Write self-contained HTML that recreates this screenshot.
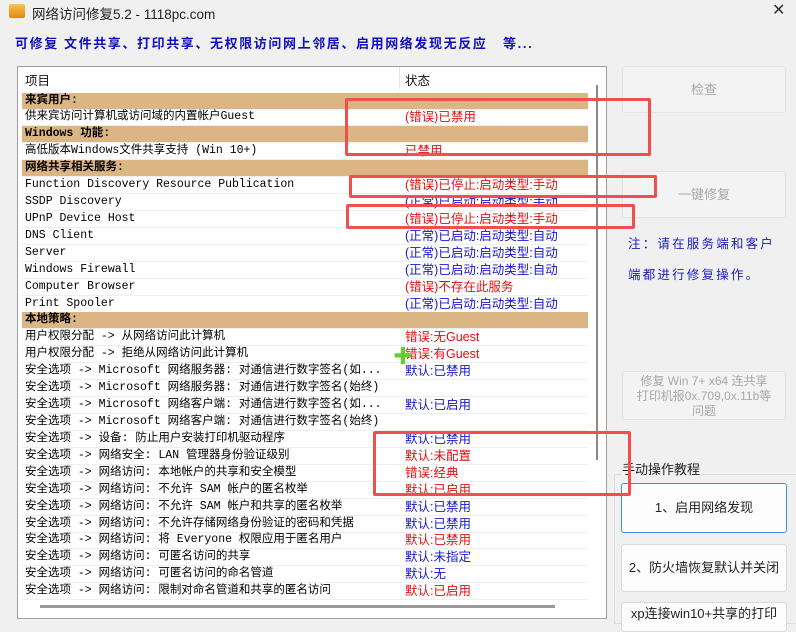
<!DOCTYPE html><html><head><meta charset="utf-8"><style>
*{margin:0;padding:0;box-sizing:border-box}
body{width:796px;height:619px;overflow:hidden;background:#f0f0f0;font-family:"Liberation Sans","Noto Sans CJK SC",sans-serif;position:relative}
.title{position:absolute;left:32px;top:3px;font-size:13.5px;color:#222}
.icon{position:absolute;left:9px;top:4px;width:16px;height:14px;border-radius:2px;background:linear-gradient(#f7c34a,#e08a10)}
.close{position:absolute;left:772px;top:0;font-size:16px;color:#333}
.banner{position:absolute;left:15px;top:33px;font-size:13px;font-weight:bold;color:#1010c0;letter-spacing:1.6px}
.list{position:absolute;left:17px;top:66px;width:590px;height:553px;background:#fff;border:1px solid #a0a0a0}
.hdr{position:absolute;top:3px;font-size:12.5px;color:#111}
.row{position:absolute;left:4px;width:566px;height:17px;border-bottom:1px solid #eee;font-size:11.5px;line-height:16px;white-space:nowrap;font-family:"Liberation Mono","Noto Sans CJK SC",monospace}
.row .a{position:absolute;left:3px}
.row .b{position:absolute;left:383px;font-family:"Liberation Sans","Noto Sans CJK SC",sans-serif;font-size:12.5px}
.cat{background:#dcb585;font-weight:bold}
.r{color:#e01010}.bl{color:#1414d0}
.btn{position:absolute;background:#f3f3f3;border:1px solid #e4e4e4;border-radius:3px;color:#a8a8a8;font-size:13px;text-align:center}
.btn2{position:absolute;background:#fdfdfd;border:1px solid #d8d8d8;border-radius:3px;color:#222;font-size:13px;text-align:center}
.note{position:absolute;left:628px;font-size:12.5px;color:#1a1ab8;letter-spacing:2.2px}
.box{position:absolute;border:3px solid #ef4f4f;border-radius:2px}
</style></head><body>
<div class="icon"></div><div class="title">网络访问修复5.2 - 1118pc.com</div><div class="close">✕</div>
<div class="banner">可修复 文件共享、打印共享、无权限访问网上邻居、启用网络发现无反应&nbsp;&nbsp; 等...</div>
<div class="list">
<div class="hdr" style="left:7px">项目</div><div class="hdr" style="left:387px">状态</div>
<div style="position:absolute;left:381px;top:0;width:1px;height:22px;background:#e5e5e5"></div>
<div id="rows"></div>
<div style="position:absolute;left:578px;top:18px;width:2px;height:375px;background:#888"></div>
<div style="position:absolute;left:22px;top:538px;width:515px;height:3px;background:#999"></div>
</div>
<div class="btn" style="left:622px;top:66px;width:164px;height:47px;line-height:45px">检查</div>
<div class="btn" style="left:622px;top:171px;width:164px;height:47px;line-height:45px">一键修复</div>
<div class="note" style="top:233px">注：请在服务端和客户</div>
<div class="note" style="top:264px">端都进行修复操作。</div>
<div class="btn" style="left:622px;top:371px;width:164px;height:49px;font-size:12px;line-height:15px;padding-top:2px">修复 Win 7+ x64 连共享<br>打印机报0x.709,0x.11b等<br>问题</div>
<div style="position:absolute;left:614px;top:474px;width:190px;height:150px;border:1px solid #ddd"></div>
<div style="position:absolute;left:622px;top:459px;font-size:13px;color:#222;background:#f0f0f0">手动操作教程</div>
<div class="btn2" style="left:621px;top:483px;width:166px;height:50px;line-height:48px;border:1.5px solid #3d8fd8">1、启用网络发现</div>
<div class="btn2" style="left:621px;top:544px;width:166px;height:48px;line-height:46px">2、防火墙恢复默认并关闭</div>
<div class="btn2" style="left:621px;top:602px;width:166px;height:30px;line-height:22px">xp连接win10+共享的打印</div>
<div class="box" style="left:345px;top:98px;width:306px;height:58px"></div>
<div class="box" style="left:349px;top:175px;width:308px;height:23px"></div>
<div class="box" style="left:346px;top:204px;width:289px;height:25px"></div>
<div class="box" style="left:373px;top:431px;width:258px;height:65px"></div>
<div style="position:absolute;left:393px;top:349px;color:#6c3;font-size:20px;font-weight:bold;line-height:16px">✚</div>
<script>
var d=[["c","来宾用户:",""],["","供来宾访问计算机或访问域的内置帐户Guest","r(错误)已禁用"],["c","Windows 功能:",""],["","高低版本Windows文件共享支持 (Win 10+)","r已禁用"],["c","网络共享相关服务:",""],
["","Function Discovery Resource Publication","r(错误)已停止:启动类型:手动"],["","SSDP Discovery","b(正常)已启动:启动类型:手动"],["","UPnP Device Host","r(错误)已停止:启动类型:手动"],["","DNS Client","b(正常)已启动:启动类型:自动"],["","Server","b(正常)已启动:启动类型:自动"],["","Windows Firewall","b(正常)已启动:启动类型:自动"],["","Computer Browser","r(错误)不存在此服务"],["","Print Spooler","b(正常)已启动:启动类型:自动"],["c","本地策略:",""],
["","用户权限分配 -> 从网络访问此计算机","r错误:无Guest"],["","用户权限分配 -> 拒绝从网络访问此计算机","r错误:有Guest"],["","安全选项 -> Microsoft 网络服务器: 对通信进行数字签名(如...","b默认:已禁用"],["","安全选项 -> Microsoft 网络服务器: 对通信进行数字签名(始终)",""],["","安全选项 -> Microsoft 网络客户端: 对通信进行数字签名(如...","b默认:已启用"],["","安全选项 -> Microsoft 网络客户端: 对通信进行数字签名(始终)",""],["","安全选项 -> 设备: 防止用户安装打印机驱动程序","b默认:已禁用"],["","安全选项 -> 网络安全: LAN 管理器身份验证级别","r默认:未配置"],["","安全选项 -> 网络访问: 本地帐户的共享和安全模型","r错误:经典"],["","安全选项 -> 网络访问: 不允许 SAM 帐户的匿名枚举","r默认:已启用"],["","安全选项 -> 网络访问: 不允许 SAM 帐户和共享的匿名枚举","b默认:已禁用"],["","安全选项 -> 网络访问: 不允许存储网络身份验证的密码和凭据","b默认:已禁用"],["","安全选项 -> 网络访问: 将 Everyone 权限应用于匿名用户","r默认:已禁用"],["","安全选项 -> 网络访问: 可匿名访问的共享","b默认:未指定"],["","安全选项 -> 网络访问: 可匿名访问的命名管道","b默认:无"],["","安全选项 -> 网络访问: 限制对命名管道和共享的匿名访问","r默认:已启用"]];
var h="";d.forEach(function(x,i){var s=x[2],c=s?(s[0]=="r"?"r":"bl"):"";h+='<div class="row'+(x[0]?' cat':'')+'" style="top:'+(25.5+i*16.92)+'px"><span class="a">'+x[1]+'</span><span class="b '+c+'">'+s.slice(1)+'</span></div>';});
document.getElementById("rows").innerHTML=h;
</script>
</body></html>
